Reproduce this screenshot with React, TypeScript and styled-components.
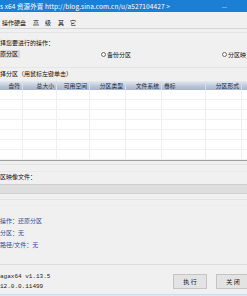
import styled, { createGlobalStyle } from "styled-components";

const GlobalStyle = createGlobalStyle`
	* { box-sizing: border-box; }
	html, body { margin: 0; padding: 0; background: #f0f0f0; }
	body {
		font-family: "Noto Sans CJK SC", "Liberation Sans", sans-serif;
		font-size: 6px;
		color: #111;
	}
`;

const columns = [
	{ label: "盘符", width: 23, align: "right" },
	{ label: "总大小", width: 34, align: "right" },
	{ label: "可用空间", width: 33, align: "right" },
	{ label: "分区类型", width: 36, align: "right" },
	{ label: "文件系统", width: 36, align: "right" },
	{ label: "卷标", width: 44, align: "left" },
	{ label: "分区形式", width: 36, align: "right" },
	{ label: "", width: 40, align: "left" },
];

const rows = [0, 1, 2, 3, 4, 5, 6];

export default function App() {
	return (
		<>
			<GlobalStyle />
			<Window>
				<TitleBar>
					<TitleText>s x64 资源外置 http://blog.sina.com.cn/u/a527104427 &gt;</TitleText>
					<MinButton>—</MinButton>
				</TitleBar>
				<MenuBar>
					<MenuItem>操作硬盘</MenuItem>
					<MenuItem>高　级</MenuItem>
					<MenuItem>其　它</MenuItem>
				</MenuBar>
				<Rule $color="#e4e4e4" />
				<Label $top={5}>择您要进行的操作：</Label>
				<RadioRow>
					<Selected>原分区</Selected>
					<Radio $left={81}>
						<Dot />备份分区
					</Radio>
					<Radio $left={91}>
						<Dot />分区映
					</Radio>
				</RadioRow>
				<Rule $color="#e6e6e6" $top={8} />
				<Label $top={1}>择分区（用鼠标左键单击）</Label>
				<Table>
					<HeaderRow>
						{columns.map((c, i) => (
							<HeaderCell key={i} $width={c.width} $align={c.align}>
								{c.label}
							</HeaderCell>
						))}
					</HeaderRow>
					{rows.map((r) => (
						<BodyRow key={r}>
							{columns.map((c, i) => (
								<BodyCell key={i} $width={c.width} />
							))}
						</BodyRow>
					))}
				</Table>
				<Rule $color="#e2e2e2" $top={3} />
				<Rule $color="#e8e8e8" $top={6} />
				<Label $top={0}>区映像文件：</Label>
				<FileBox />
				<Rule $color="#e4e4e4" $top={5} />
				<Rule $color="#ebebeb" $top={5} />
				<Info>
					<InfoLine>操作：还原分区</InfoLine>
					<InfoLine>分区：无</InfoLine>
					<InfoLine>路径/文件：无</InfoLine>
				</Info>
				<Rule $color="#dcdcdc" $top={13} />
				<Footer>
					<Version>
						<span>agax64 v1.13.5</span>
						<span>12.0.0.11499</span>
					</Version>
					<Buttons>
						<Button>执 行</Button>
						<Button>关 闭</Button>
					</Buttons>
				</Footer>
				<BottomStrip />
			</Window>
		</>
	);
}

const Window = styled.div`
	width: 247px;
	height: 296px;
	overflow: hidden;
	display: flex;
	flex-direction: column;
	background: #f0f0f0;
`;

const TitleBar = styled.div`
	height: 12px;
	flex-shrink: 0;
	background: #1b7fd6;
	color: #fff;
	display: flex;
	align-items: center;
	justify-content: space-between;
	padding-right: 20px;
`;

const TitleText = styled.span`
	font-size: 6.5px;
	white-space: nowrap;
	letter-spacing: 0.1px;
`;

const MinButton = styled.span`
	font-size: 6px;
	color: #cfe4f7;
`;

const MenuBar = styled.div`
	height: 17px;
	flex-shrink: 0;
	display: flex;
	align-items: center;
	gap: 7px;
	padding: 4px 0 0 2px;
	border-bottom: 1px solid #d7d7d7;
`;

const MenuItem = styled.span`
	white-space: nowrap;
`;

const Rule = styled.div<{ $color: string; $top?: number }>`
	height: 1px;
	flex-shrink: 0;
	margin-top: ${(p) => p.$top ?? 3}px;
	background: ${(p) => p.$color};
`;

const Label = styled.div<{ $top: number }>`
	margin-top: ${(p) => p.$top}px;
	line-height: 10px;
	white-space: nowrap;
`;

const RadioRow = styled.div`
	display: flex;
	align-items: center;
	height: 10px;
	margin-top: 1px;
	white-space: nowrap;
`;

const Selected = styled.span`
	background: #d9d9d9;
	padding: 0 2px 0 0;
	line-height: 8px;
`;

const Radio = styled.span<{ $left: number }>`
	margin-left: ${(p) => p.$left}px;
	display: flex;
	align-items: center;
	gap: 1px;
`;

const Dot = styled.span`
	width: 5px;
	height: 5px;
	border: 1px solid #6d6d6d;
	border-radius: 50%;
	background: #fff;
`;

const Table = styled.div`
	margin-top: 2px;
	background: #fff;
	border-bottom: 1px solid #9f9f9f;
	display: flex;
	flex-direction: column;
	flex-shrink: 0;
`;

const HeaderRow = styled.div`
	display: flex;
	height: 9px;
	background: linear-gradient(#e6ebf2, #b8c4d6 60%, #a6b4c9);
`;

const HeaderCell = styled.div<{ $width: number; $align: string }>`
	width: ${(p) => p.$width}px;
	flex-shrink: 0;
	border-right: 1px solid #d8dfe9;
	font-size: 5.8px;
	line-height: 9px;
	color: #1e2a3a;
	text-align: ${(p) => p.$align};
	padding: 0 2px;
	white-space: nowrap;
	overflow: hidden;
`;

const BodyRow = styled.div`
	display: flex;
	height: 10px;
	border-bottom: 1px solid #f1f1f1;
`;

const BodyCell = styled.div<{ $width: number }>`
	width: ${(p) => p.$width}px;
	flex-shrink: 0;
	border-right: 1px solid #efefef;
`;

const FileBox = styled.div`
	margin-top: 2px;
	height: 10px;
	flex-shrink: 0;
	background: #dedede;
	border-top: 1px solid #cfcfcf;
	border-bottom: 1px solid #d2d2d2;
`;

const Info = styled.div`
	margin-top: 9px;
	display: flex;
	flex-direction: column;
	color: #1f4f9e;
	line-height: 12px;
`;

const InfoLine = styled.span`
	white-space: nowrap;
`;

const Footer = styled.div`
	height: 29px;
	flex-shrink: 0;
	display: flex;
	align-items: center;
	justify-content: space-between;
	padding-top: 4px;
`;

const Version = styled.div`
	display: flex;
	flex-direction: column;
	font-family: "Liberation Mono", "DejaVu Sans Mono", monospace;
	font-size: 6px;
	line-height: 10px;
	color: #222;
`;

const Buttons = styled.div`
	display: flex;
	gap: 9px;
	margin-right: -3px;
`;

const Button = styled.div`
	width: 34px;
	height: 15px;
	background: #e3e3e3;
	border: 1px solid #c4c4c4;
	display: flex;
	align-items: center;
	justify-content: center;
	font-size: 6px;
	white-space: nowrap;
`;

const BottomStrip = styled.div`
	flex: 1;
	background: #dbe9f5;
	border-top: 1px solid #cbdcec;
`;
